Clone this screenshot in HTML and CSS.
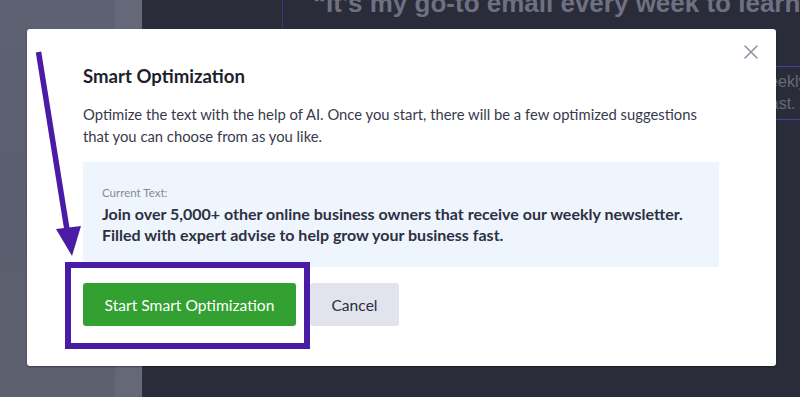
FILE: index.html
```html
<!DOCTYPE html>
<html>
<head>
<meta charset="utf-8">
<link rel="stylesheet" href="styles.css">
</head>
<body>
<div class="page">
  <aside class="sidebar">
    <div class="side-a"></div>
    <div class="side-b"></div>
  </aside>
  <main class="main">
    <div class="quote">
      <p class="quote-line">“It's my go-to email every week to learn</p>
      <p class="quote-line">from people just like me to grow my business.”</p>
    </div>
    <div class="selected-text">
      <p class="sel-1">receive our weekly newsletter.</p>
      <p class="sel-2">grow your business fast.</p>
    </div>
  </main>
</div>

<div class="modal">
  <button class="close" aria-label="Close">
    <svg width="16" height="16" viewBox="0 0 16 16"><path d="M2 2 L14 14 M14 2 L2 14" stroke="#8e92a2" stroke-width="1.6" fill="none" stroke-linecap="round"/></svg>
  </button>
  <h2 class="title">Smart Optimization</h2>
  <p class="desc">Optimize the text with the help of AI. Once you start, there will be a few optimized suggestions that you can choose from as you like.</p>
  <div class="current">
    <div class="current-label">Current Text:</div>
    <div class="current-text">Join over 5,000+ other online business owners that receive our weekly newsletter. Filled with expert advise to help grow your business fast.</div>
  </div>
  <div class="actions">
    <button class="btn btn-primary">Start Smart Optimization</button>
    <button class="btn btn-secondary">Cancel</button>
  </div>
</div>

<div class="highlight"></div>
<svg class="arrow" width="800" height="397" viewBox="0 0 800 397">
  <line x1="38.5" y1="52" x2="68" y2="236" stroke="#4a1ca6" stroke-width="5.5"/>
  <polygon points="56,229 81,226 72,256" fill="#4a1ca6"/>
</svg>
</body>
</html>
```

FILE: styles.css
```css
* { box-sizing: border-box; }
html, body { margin: 0; padding: 0; }
body {
  width: 800px;
  height: 397px;
  overflow: hidden;
  position: relative;
  background: #2b2d3a;
  font-family: Lato, "Noto Sans", sans-serif;
}
.page {
  display: flex;
  height: 397px;
}
.sidebar {
  width: 142px;
  display: flex;
  flex-shrink: 0;
}
.side-a {
  width: 115px;
  background: linear-gradient(180deg, #5d6171 0%, #5a5e6e 50%, #5c606f 100%);
}
.side-b {
  width: 27px;
  background: #646879;
}
.main {
  flex: 1;
  position: relative;
  overflow: hidden;
  background: #2a2c39;
  border-left: 1px solid #2f3140;
}
.quote {
  margin-top: -16px;
  margin-left: 139px;
  padding-left: 30px;
  border-left: 1px solid #3e3680;
  height: 48px;
  overflow: hidden;
}
.quote-line {
  margin: 0;
  font-family: "Liberation Sans", Arial, sans-serif;
  font-weight: bold;
  font-size: 26px;
  line-height: 38px;
  color: #6e7181;
  white-space: nowrap;
}
.selected-text {
  position: absolute;
  left: 480px;
  top: 66px;
  width: 600px;
  padding: 4px 0;
  border-top: 1px solid #4a3f9c;
  border-bottom: 1px solid #4a3f9c;
}
.selected-text p {
  margin: 0;
  font-family: "Liberation Sans", Arial, sans-serif;
  font-size: 16px;
  line-height: 22px;
  color: #676a7b;
  white-space: nowrap;
}
.sel-1 { padding-left: 51px; }
.sel-2 { margin-left: -14px; }
.modal {
  position: absolute;
  left: 27px;
  top: 29px;
  width: 749px;
  height: 337px;
  background: #fff;
  border-radius: 3px;
  padding: 35px 56px 0 56px;
  box-shadow: 0 1px 2px rgba(0,0,0,0.35);
}
.close {
  position: absolute;
  right: 14px;
  top: 12px;
  width: 22px;
  height: 22px;
  border: 0;
  padding: 3px;
  background: transparent;
}
.title {
  margin: 0;
  font-size: 18.6px;
  line-height: 24px;
  font-weight: 700;
  color: #1e1f2d;
}
.desc {
  margin: 15px 0 0 0;
  font-size: 14.8px;
  line-height: 22px;
  color: #373a4c;
  width: 630px;
}
.current {
  margin-top: 15px;
  width: 636px;
  background: #eef5fd;
  padding: 23px 19px 22px 19px;
}
.current-label {
  font-size: 11.5px;
  line-height: 16px;
  color: #858a99;
}
.current-text {
  margin-top: 2px;
  font-size: 16px;
  line-height: 21px;
  font-weight: 700;
  color: #2d3042;
}
.actions {
  margin-top: 16px;
  display: flex;
  gap: 14px;
}
.btn {
  height: 43px;
  border: 0;
  border-radius: 3px;
  font-family: Lato, "Noto Sans", sans-serif;
  font-size: 15.6px;
  padding: 0;
}
.btn-primary {
  width: 213px;
  background: #33a032;
  color: #fff;
}
.btn-secondary {
  width: 89px;
  background: #e1e4ed;
  color: #2c2e3c;
}
.highlight {
  position: absolute;
  left: 65px;
  top: 262px;
  width: 245px;
  height: 87px;
  border: 6px solid #4a1ca6;
}
.arrow {
  position: absolute;
  left: 0;
  top: 0;
  pointer-events: none;
}
```
